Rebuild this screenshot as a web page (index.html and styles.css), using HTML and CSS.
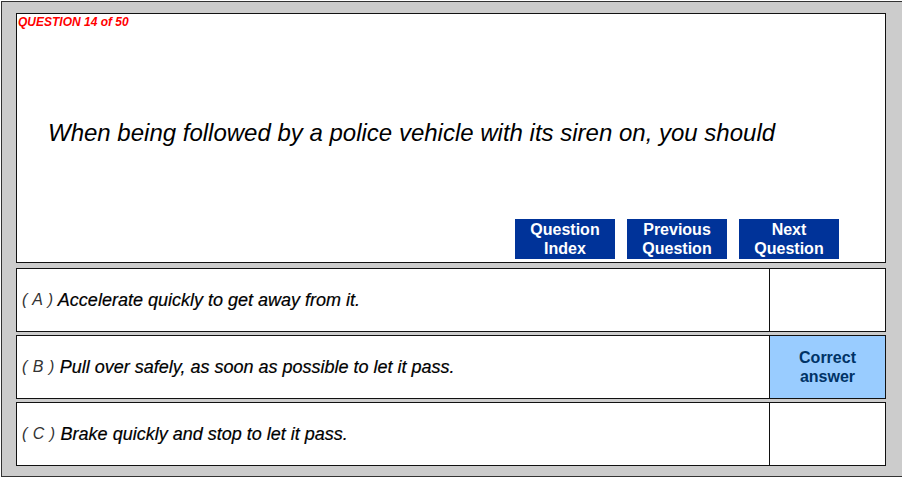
FILE: index.html
```
<!DOCTYPE html>
<html lang="en">
<head>
  <meta charset="UTF-8" />
  <title>Question 14 of 50</title>
  <link rel="stylesheet" href="styles.css">
</head>
<body>
  <div class="frame">
    <div class="quiz">
      <div class="question-box">
        <div class="counter">QUESTION 14 of 50</div>
        <p class="question">When being followed by a police vehicle with its siren on, you should</p>
        <div class="button-bar">
          <button>Question<br>Index</button>
          <button>Previous<br>Question</button>
          <button>Next<br>Question</button>
        </div>
      </div>

      <div class="answer">
        <div class="answer-text"><span class="letter">( A )</span> Accelerate quickly to get away from it.</div>
        <div class="answer-mark"></div>
      </div>
      <div class="answer">
        <div class="answer-text"><span class="letter">( B )</span> Pull over safely, as soon as possible to let it pass.</div>
        <div class="answer-mark correct">Correct<br>answer</div>
      </div>
      <div class="answer">
        <div class="answer-text"><span class="letter">( C )</span> Brake quickly and stop to let it pass.</div>
        <div class="answer-mark"></div>
      </div>
    </div>
  </div>
</body>
</html>
```

FILE: styles.css
```
html, body {
  margin: 0;
  padding: 0;
  background: #fff;
  overflow: hidden;
}
body {
  font-family: "Liberation Sans", Arial, sans-serif;
  color: #000;
}
.frame {
  margin: 1px 0 0 1px;
  background: #cccccc;
  border-top: 1px solid #333;
  border-left: 1px solid #333;
  border-bottom: 1px solid #333;
  padding: 11px 0 10px 14px;
}
.quiz {
  width: 870px;
  display: flex;
  flex-direction: column;
}
.question-box {
  height: 248px;
  background: #fff;
  border: 1px solid #111;
  display: flex;
  flex-direction: column;
}
.counter {
  color: #ff0000;
  font-size: 12px;
  font-weight: bold;
  font-style: italic;
  padding: 1px 0 0 1px;
  line-height: 14px;
}
.question {
  margin: 0;
  padding: 90px 0 0 31px;
  font-size: 24px;
  font-style: italic;
  line-height: 28px;
}
.button-bar {
  margin-top: auto;
  display: flex;
  justify-content: flex-end;
  gap: 12px;
  padding: 0 46px 3px 0;
}
button {
  width: 100px;
  height: 40px;
  background: #003399;
  border: none;
  color: #fff;
  font-family: "Liberation Sans", Arial, sans-serif;
  font-size: 16px;
  font-weight: bold;
  line-height: 19px;
  padding: 0;
  margin: 0;
  cursor: pointer;
}
.answer {
  display: flex;
  height: 62px;
  background: #fff;
  border: 1px solid #111;
  margin-top: 3px;
}
.question-box + .answer {
  margin-top: 5px;
}
.answer-text {
  flex: 1;
  display: flex;
  align-items: center;
  padding-left: 5px;
  font-size: 18px;
  font-style: italic;
  color: #000;
  -webkit-text-stroke: 0.2px #000;
  white-space: pre;
}
.letter {
  color: #333;
  font-size: 16px;
  letter-spacing: 0.5px;
  -webkit-text-stroke: 0;
}
.answer-mark {
  width: 115px;
  border-left: 1px solid #111;
  display: flex;
  align-items: center;
  justify-content: center;
  text-align: center;
  font-size: 16px;
  font-weight: bold;
  line-height: 19px;
}
.answer-mark.correct {
  background: #99ccff;
  color: #003366;
}
```
